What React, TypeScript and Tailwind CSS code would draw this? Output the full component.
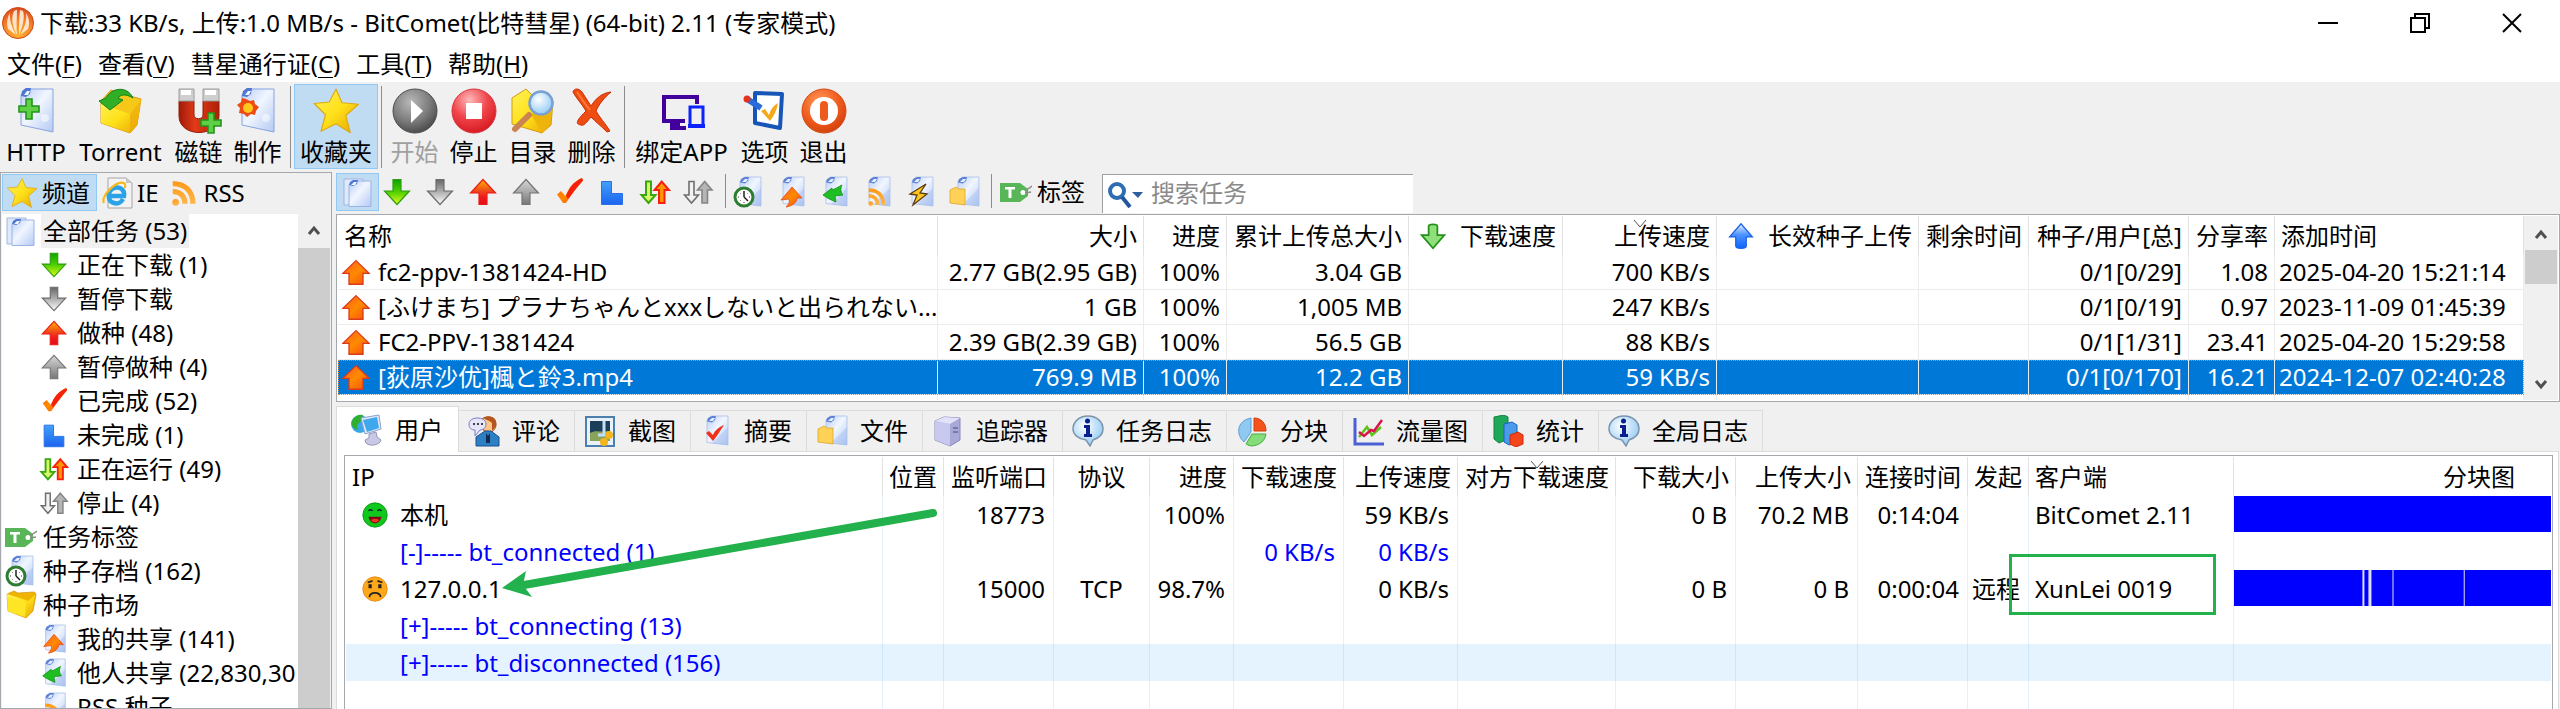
import { type FC, type ReactNode } from "react";

interface IconProps {
  className?: string
}

const Svg: FC<{ className?: string; size?: number; children: ReactNode }> = ({
  className = "size-8",
  size = 32,
  children,
}) => (
  <svg className={`shrink-0 ${className}`} viewBox={`0 0 ${size} ${size}`} fill="none" aria-hidden="true">
    {children}
  </svg>
)

// Gradients shared by every icon on the page
const Gradients = () => (
  <svg className="absolute size-0" aria-hidden="true">
    <defs>
      <linearGradient id="page" x1="0" y1="0" x2="1" y2="1">
        <stop offset="0" stopColor="#b9cdf7" />
        <stop offset="0.45" stopColor="#f1f6ff" />
        <stop offset="1" stopColor="#b4c9f3" />
      </linearGradient>
      <linearGradient id="green" x1="0" y1="0" x2="0" y2="1">
        <stop offset="0" stopColor="#0da400" />
        <stop offset="0.5" stopColor="#4fd000" />
        <stop offset="1" stopColor="#e4fb20" />
      </linearGradient>
      <linearGradient id="red" x1="0" y1="0" x2="0" y2="1">
        <stop offset="0" stopColor="#ffb400" />
        <stop offset="0.45" stopColor="#f04a1a" />
        <stop offset="0.7" stopColor="#ee1c1c" />
        <stop offset="1" stopColor="#e30d1b" />
      </linearGradient>
      <linearGradient id="orange" x1="0" y1="0" x2="1" y2="1">
        <stop offset="0" stopColor="#ff5a20" />
        <stop offset="0.5" stopColor="#ff8a00" />
        <stop offset="1" stopColor="#f84a10" />
      </linearGradient>
      <linearGradient id="grayDown" x1="0" y1="0" x2="0" y2="1">
        <stop offset="0" stopColor="#666666" />
        <stop offset="0.5" stopColor="#b0b0b0" />
        <stop offset="1" stopColor="#ffffff" />
      </linearGradient>
      <linearGradient id="grayUp" x1="0" y1="0" x2="0" y2="1">
        <stop offset="0" stopColor="#d8d8d8" />
        <stop offset="1" stopColor="#777777" />
      </linearGradient>
      <linearGradient id="yellow" x1="0" y1="0" x2="1" y2="1">
        <stop offset="0" stopColor="#fff35a" />
        <stop offset="0.5" stopColor="#ffe11a" />
        <stop offset="1" stopColor="#e5a200" />
      </linearGradient>
      <linearGradient id="blue" x1="0" y1="0" x2="0" y2="1">
        <stop offset="0" stopColor="#41a0fb" />
        <stop offset="1" stopColor="#1c64ee" />
      </linearGradient>
      <linearGradient id="blueUp" x1="0" y1="0" x2="0" y2="1">
        <stop offset="0" stopColor="#e4efff" />
        <stop offset="0.45" stopColor="#4d93ff" />
        <stop offset="1" stopColor="#0a66ff" />
      </linearGradient>
      <linearGradient id="rss" x1="0" y1="0" x2="0" y2="1">
        <stop offset="0" stopColor="#ff9c1c" />
        <stop offset="1" stopColor="#ffb64a" />
      </linearGradient>
      <linearGradient id="magnet" x1="0" y1="0" x2="1" y2="0">
        <stop offset="0" stopColor="#a01a08" />
        <stop offset="0.4" stopColor="#e23a18" />
        <stop offset="1" stopColor="#b02008" />
      </linearGradient>
      <radialGradient id="ballGray" cx="0.4" cy="0.3" r="0.75">
        <stop offset="0" stopColor="#b9b9b9" />
        <stop offset="0.6" stopColor="#7a7a7a" />
        <stop offset="1" stopColor="#454545" />
      </radialGradient>
      <radialGradient id="ballRed" cx="0.4" cy="0.25" r="0.8">
        <stop offset="0" stopColor="#ffb9b9" />
        <stop offset="0.5" stopColor="#f0474d" />
        <stop offset="1" stopColor="#d5141c" />
      </radialGradient>
      <radialGradient id="ballOrange" cx="0.4" cy="0.3" r="0.75">
        <stop offset="0" stopColor="#ff9a5a" />
        <stop offset="0.6" stopColor="#ef5a1c" />
        <stop offset="1" stopColor="#d0400c" />
      </radialGradient>
      <radialGradient id="glass" cx="0.4" cy="0.35" r="0.7">
        <stop offset="0" stopColor="#ffffff" />
        <stop offset="1" stopColor="#8cc8f4" />
      </radialGradient>
      <radialGradient id="comet" cx="0.5" cy="0.9" r="0.9">
        <stop offset="0" stopColor="#ffb02a" />
        <stop offset="0.6" stopColor="#f5802a" />
        <stop offset="1" stopColor="#d9481c" />
      </radialGradient>
    </defs>
  </svg>
)

const PageShape = () => (
  <>
    <path d="M7 5 11 1H28V30L7 27.500Z" fill="url(#page)" stroke="#aabfe8" strokeWidth="0.800" />
    <path d="M28 12V30L12 28Z" fill="#9db9ee" opacity="0.400" />
    <path d="M7 6.500 8 3l4-2 4 0-1 4-3 2.500Z" fill="#5d82d8" />
    <path d="M9 6 12 3h3l-2 3Z" fill="#e8f0ff" />
  </>
)

const CometIcon = () => (
  <Svg>
    <circle cx="16" cy="16" r="15.500" fill="url(#comet)" stroke="#cf4a1d" />
    <path d="M14 28 6 22C4 15 6 9 8 6c-1 7 2 14 6 22ZM15 28C10 19 9 10 12 4c2-1 2-1 3-1 0 8-1 17 0 25ZM17 28c0-8 0-17 1-25l3 1c2 6 0 15-4 24ZM18 28c5-8 7-15 6-22 3 4 4 11 2 16Z" fill="#fff5e4" opacity="0.850" />
  </Svg>
)

const DownIcon = ({ className }: IconProps) => (
  <Svg className={className}>
    <path d="M12 3.500h8V15h8.500L16 28.500 3.500 15H12Z" fill="url(#green)" stroke="#2f9d10" strokeWidth="1.200" />
  </Svg>
)
const DownGrayIcon = ({ className }: IconProps) => (
  <Svg className={className}>
    <path d="M12 3.500h8V15h8.500L16 28.500 3.500 15H12Z" fill="url(#grayDown)" stroke="#6c6c6c" strokeWidth="1.200" />
  </Svg>
)
const UpIcon = ({ className }: IconProps) => (
  <Svg className={className}>
    <path d="M12 28.500h8V17h8.500L16 3.500 3.500 17H12Z" fill="url(#red)" stroke="#ea1c14" strokeWidth="1.200" />
  </Svg>
)
const UpGrayIcon = ({ className }: IconProps) => (
  <Svg className={className}>
    <path d="M12 28.500h8V17h8.500L16 3.500 3.500 17H12Z" fill="url(#grayUp)" stroke="#757575" strokeWidth="1.200" />
  </Svg>
)
const CheckIcon = ({ className }: IconProps) => (
  <Svg className={className}>
    <path d="M4 18.500 8 15l4.500 5C16 12 20 6 29 2l1 2.500C24 11 19 18 13 27h-3Z" fill="url(#orange)" />
    <path d="M13 20C16 12 20 6 29 2l1 2.500C24 11 19 18 15 23Z" fill="#f7200c" />
  </Svg>
)
const PartIcon = ({ className }: IconProps) => (
  <Svg className={className}>
    <path d="M5.500 5.500h10v12h11v11h-21Z" fill="url(#blue)" stroke="#2a6fe8" />
  </Svg>
)
const RunIcon = ({ className }: IconProps) => (
  <Svg className={className}>
    <path d="M7 5.500h5V19h4.500L9.500 27 2.500 19H7Z" fill="#d9f76a" stroke="#38a80c" strokeWidth="2" />
    <path d="M20 27h5.500V14H30L22.700 5.500 15.500 14H20Z" fill="#ff9500" stroke="#f8200c" strokeWidth="2" />
  </Svg>
)
const StoppedIcon = ({ className }: IconProps) => (
  <Svg className={className}>
    <path d="M7 5.500h5V19h4.500L9.500 27 2.500 19H7Z" fill="#f2f2f2" stroke="#6f6f6f" strokeWidth="1.600" />
    <path d="M20 27h5.500V14H30L22.700 5.500 15.500 14H20Z" fill="#b5b5b5" stroke="#858585" strokeWidth="1.600" />
  </Svg>
)
const PagesIcon = ({ className }: IconProps) => (
  <Svg className={className}>
    <path d="M2 3h19v26H2Z" fill="#dfe9fb" stroke="#9fb7e3" />
    <path d="M7 9 11 5h18v25.500H7Z" fill="url(#page)" stroke="#9ab2e4" />
    <path d="m7 9 1-3 3-2h5l-1 4-4 2Z" fill="#4f78d2" />
    <path d="m9 9 3-3h3l-2 3Z" fill="#f0f5ff" />
  </Svg>
)
const TagIcon = ({ className }: IconProps) => (
  <Svg className={className}>
    <path d="M0 7h20l8 6v7l-8 6H0Z" fill="#58b558" />
    <path d="M5 11h10v2.500h-3.500V22h-3v-8.500H5Z" fill="#fff" />
    <circle cx="23" cy="16.500" r="2.500" fill="#fff" />
    <path d="m25 15 7-5M25 17l6-1" stroke="#8a8a8a" strokeWidth="1.500" />
  </Svg>
)
const ArchiveIcon = ({ className }: IconProps) => (
  <Svg className={className}>
    <PageShape />
    <circle cx="11" cy="21" r="9" fill="#fff" stroke="#2f7d32" strokeWidth="3" />
    <path d="M11 21V15M11 21l4 4" stroke="#222" strokeWidth="1.500" />
    <path d="M5 21h1M16 21h1M11 27v-1M7 17l.5.5M15 17l-.5.5M7 25l.5-.5" stroke="#333" />
  </Svg>
)
const FolderIcon = ({ className }: IconProps) => (
  <Svg className={className}>
    <path d="m2 5 7-3 4 2 15-1c2 0 3 1 3 3l-3 16-7 7L3 22Z" fill="#f0b400" stroke="#c98c10" strokeWidth="0.600" />
    <path d="m2 5 16 5 5 2 7-6-3 16-6 7L3 22Z" fill="url(#yellow)" />
    <path d="m3 8 18 6-1 14L3 22Z" fill="#ffe625" />
  </Svg>
)
const ShareUpIcon = ({ className }: IconProps) => (
  <Svg className={className}>
    <PageShape />
    <path d="M16 11 26 22h-5c0 4-4 8-11 9 3-3 4-5 3-8l-8 1Z" fill="url(#orange)" stroke="#e54a1a" strokeWidth="0.800" />
  </Svg>
)
const ShareDownIcon = ({ className }: IconProps) => (
  <Svg className={className}>
    <PageShape />
    <path d="M23 9c-2 4-1 8 1 10l-8 1 1 6C12 24 8 22 4 19l9-7 0 2c3-1 6-3 10-5Z" fill="#1fbf24" stroke="#0f8d16" strokeWidth="0.800" />
  </Svg>
)
const RssShape = () => (
  <>
    <circle cx="7" cy="26" r="3.500" fill="url(#rss)" />
    <path d="M4 14.500c8 0 13 5 13 13M4 6c13 0 21.500 8 21.500 21.500" stroke="url(#rss)" strokeWidth="5.500" />
  </>
)
const RssIcon = ({ className }: IconProps) => (
  <Svg className={className}>
    <RssShape />
  </Svg>
)
const RssPageIcon = ({ className }: IconProps) => (
  <Svg className={className}>
    <PageShape />
    <g transform="translate(4 10) scale(0.680)">
      <RssShape />
    </g>
  </Svg>
)
const FlashIcon = ({ className }: IconProps) => (
  <Svg className={className}>
    <PageShape />
    <path d="m21 8-16 10 7 1-4 10 14-11-7-1Z" fill="#ffc61a" stroke="#5a3a10" strokeWidth="1.300" />
  </Svg>
)
const FilesIcon = ({ className }: IconProps) => (
  <Svg className={className}>
    <g transform="translate(3 0)">
      <PageShape />
    </g>
    <path d="m2 14 6-3 3 2 6 0v16l-15-2Z" fill="#ffd257" stroke="#dba52c" strokeWidth="0.800" />
  </Svg>
)
const SummaryIcon = ({ className }: IconProps) => (
  <Svg className={className}>
    <PageShape />
    <path d="m6 18 3-2 4 4c2-5 6-8 11-10-4 6-7 11-11 16Z" fill="#f0301a" />
  </Svg>
)
const StarShape = () => (
  <path d="m16 1.500 4 9 11 1-8.500 7.500 3 11.500-9.500-6-10 5 3-11L1.500 11l10-1Z" fill="url(#yellow)" stroke="#e0a912" strokeWidth="0.800" strokeLinejoin="round" />
)
const StarIcon = ({ className }: IconProps) => (
  <Svg className={className}>
    <StarShape />
  </Svg>
)
const IeIcon = ({ className }: IconProps) => (
  <Svg className={className}>
    <path d="M6 1h18l6 5v25H6Z" fill="#f3f3f3" stroke="#a5a5a5" />
    <path d="M24 1v5h6Z" fill="#c5c5c5" />
    <path d="M21 22c-2 4-6 5-9 4-7-2-7-12 0-15 6-2 11 2 10 8H9" stroke="#2ba3e6" strokeWidth="4.500" />
    <path d="M2 26C-2 20 14 3 22 6c2 1 1 3 1 5" stroke="#f8b91a" strokeWidth="2.200" />
  </Svg>
)

// Main tool bar icons are drawn on a 48 unit grid
const BigPage = () => (
  <>
    <path d="m14 8 4-6h28v43L14 38Z" fill="url(#page)" stroke="#86a3e0" />
    <path d="m14 9 1-5 4-3h5l-1 6-4 3Z" fill="#4f78d2" />
    <path d="m17 8 3-4h3l-2 4Z" fill="#f0f5ff" />
    <circle cx="38" cy="31" r="4" fill="#fff" opacity="0.500" />
  </>
)
const Plus = () => (
  <path d="M7 0h6v7h7v6h-7v7H7v-7H0V7h7Z" fill="#5fd046" stroke="#25931c" strokeWidth="1.600" />
)
const HttpIcon = () => (
  <Svg className="size-12" size={48}>
    <g transform="translate(-5 0)">
      <BigPage />
    </g>
    <g transform="translate(7 12)">
      <Plus />
    </g>
  </Svg>
)
const TorrentIcon = () => (
  <Svg className="size-12" size={48}>
    <path d="m4 14 10-11 8 3 22 6-4 26-7 8L4 36Z" fill="#f5c81a" stroke="#d79a10" />
    <path d="m4 17 29 10 11-15-4 26-7 8L4 36Z" fill="url(#yellow)" />
    <path d="m33 27 11-15-4 26-7 8Z" fill="#eda90a" opacity="0.700" />
    <path d="M2 14 9 11C14 1 30-2 36 11c-8-5-13-3-15 0l5 2-13 10Z" fill="#2fae26" stroke="#14831a" />
  </Svg>
)
const MagnetIcon = () => (
  <Svg className="size-12" size={48}>
    <path d="M4 14h15v14c0 5 9 5 9 0V14h16v15c0 22-40 22-40 0Z" fill="url(#magnet)" stroke="#8e1c08" />
    <path d="M4 2h15v12H4ZM28 2h16v12H28Z" fill="#cfcfcf" stroke="#9c9c9c" />
    <path d="M6 3h10v5H6ZM30 3h11v5H30Z" fill="#fff" />
    <g transform="translate(26 26)">
      <Plus />
    </g>
  </Svg>
)
const MakeIcon = () => (
  <Svg className="size-12" size={48}>
    <g transform="translate(-6 0)">
      <BigPage />
    </g>
    <path d="m12 12 4 2 4-1 1 4 4 3-3 4-1 4-4-1-4 3-3-3-5-1 1-5-3-3 4-3 1-4Z" fill="#ee4a12" />
    <circle cx="14" cy="21" r="5" fill="#ffc71e" />
  </Svg>
)
const BigStarIcon = () => (
  <Svg className="size-12">
    <StarShape />
  </Svg>
)
const StartIcon = () => (
  <Svg className="size-12" size={48}>
    <circle cx="24" cy="24" r="22" fill="url(#ballGray)" stroke="#4c4c4c" />
    <path d="m20 13 12 11-12 12Z" fill="#fff" />
  </Svg>
)
const StopIcon = () => (
  <Svg className="size-12" size={48}>
    <circle cx="24" cy="24" r="22" fill="url(#ballRed)" stroke="#d8343a" />
    <path d="M16 16h16v16H16Z" fill="#fff" />
  </Svg>
)
const DirectoryIcon = () => (
  <Svg className="size-12" size={48}>
    <path d="m3 11 14-9 7 7 20 5-2 24-9 8L3 37Z" fill="url(#yellow)" stroke="#d79a10" />
    <path d="m22 27 20-8-1 19-8 8Z" fill="#eeb40c" />
    <path d="M20 28 6 42" stroke="#c98450" strokeWidth="6" strokeLinecap="round" />
    <circle cx="32" cy="16" r="11.500" fill="url(#glass)" stroke="#7aa0d0" strokeWidth="2.500" />
  </Svg>
)
const DeleteIcon = () => (
  <Svg className="size-12" size={48}>
    <path d="M5 5c1-4 6-4 9 0l9 14c5-8 11-13 20-14-7 6-12 12-15 19 4 7 9 12 14 20l-3 1c-6-6-11-10-16-15-5 6-7 9-10 8-6-1-5-4 5-14C14 17 8 11 5 5Z" fill="#ee4c10" stroke="#c83008" />
    <path d="M9 5c5 8 9 13 13 18" stroke="#ff7a30" strokeWidth="2" />
  </Svg>
)
const BindIcon = () => (
  <Svg className="size-12" size={48}>
    <path d="M27 34H6V10h33v7" stroke="#42009c" strokeWidth="4" />
    <path d="M20 34v4h-6v3h14" stroke="#42009c" strokeWidth="4" />
    <path d="M32 20h13v19H32Z" stroke="#0b24fb" strokeWidth="3" />
    <path d="M30 37h17v4H30Z" fill="#0b24fb" />
  </Svg>
)
const OptionsIcon = () => (
  <Svg className="size-12" size={48}>
    <path d="m14 6 27 1-2 34-25-5Z" fill="#fff" stroke="#1756b6" strokeWidth="4" strokeLinejoin="round" />
    <path d="m20 24 4-2 4 6c2-6 4-9 9-12-1 7-4 13-8 18Z" fill="#f6a81c" />
    <path d="m6 12 14 9" stroke="#2a6bdc" strokeWidth="6" />
    <circle cx="6" cy="12" r="3.500" fill="#e5321a" />
  </Svg>
)
const ExitIcon = () => (
  <Svg className="size-12" size={48}>
    <circle cx="24" cy="24" r="22" fill="url(#ballOrange)" stroke="#d04a14" />
    <circle cx="24" cy="24" r="14" fill="#fff" />
    <rect x="20" y="14" width="8" height="20" rx="4" fill="#ee5a1c" />
  </Svg>
)

// Detail tab icons
const PeersIcon = () => (
  <Svg>
    <circle cx="9" cy="10" r="9" fill="#3aa8e8" />
    <path d="M2 5c3-4 7-5 10-4l-2 6-4 4 1 5C1 15-1 9 2 5Z" fill="#2fae2f" />
    <path d="m10 4 18-3 2 14-16 5Z" fill="#dfe8f8" stroke="#8ea3cf" />
    <path d="m12 6 14-3 2 11-12 4Z" fill="#3fa7ee" />
    <path d="m18 20 7-2 1 5 4 3c-1 5-11 7-15 3l-1-3 4-2Z" fill="#c9c9e6" stroke="#9595ba" />
  </Svg>
)
const CommentIcon = () => (
  <Svg>
    <path d="M14 4c4-4 14-3 14 6 0 3-2 5-4 7l-8-1Z" fill="#ffc685" stroke="#a8542a" />
    <path d="M15 3c8-4 15 0 13 8l-4 5 0-8c-3-3-6-3-9-5Z" fill="#b4561f" />
    <path d="M8 31V22l9-6h6l8 6v9Z" fill="#2d7fc4" stroke="#1c4f92" />
    <path d="m18 18 2 3 2-3 0 10h-4Z" fill="#10294f" />
    <path d="M1 9c0-8 17-8 17 0 0 4-3 6-6 6l-5 6v-6c-4 0-6-2-6-6Z" fill="#e6e6fb" stroke="#7a7ac8" />
    <path d="M5 9h2M9 9h2M13 9h2" stroke="#444" strokeWidth="2" />
  </Svg>
)
const ShotIcon = () => (
  <Svg>
    <path d="M2 2h28v29H2Z" fill="#e8f1fa" stroke="#4d7fae" strokeWidth="2" />
    <path d="M6 6h20v20H6Z" fill="#1d3e58" />
    <path d="M6 18c6-4 12 0 20-2v10H6Z" fill="#8aa35a" />
    <path d="M20 6v13M14 20h12" stroke="#bfe0f5" strokeWidth="3" />
    <circle cx="25" cy="20" r="4" fill="#f3b51a" />
    <circle cx="20" cy="27" r="4" fill="#f3b51a" />
  </Svg>
)
const TrackerIcon = () => (
  <Svg>
    <path d="m3 6 9-4 16 1v22l-10 6L3 25Z" fill="#a9a9d8" stroke="#8686b8" />
    <path d="m3 6 15 3v22L3 25Z" fill="#c9c9ef" />
    <path d="m3 6 9-4 16 1-10 6Z" fill="#e2e2fa" />
    <path d="M21 13h5M21 17h5" stroke="#7777ad" strokeWidth="2" />
  </Svg>
)
const LogIcon = () => (
  <Svg>
    <path d="M16 1c9 0 15 6 15 13 0 6-4 9-10 11l-3 6-4-6C7 24 1 20 1 14 1 7 7 1 16 1Z" fill="url(#glass)" stroke="#7c93ac" strokeWidth="1.500" />
    <circle cx="15.500" cy="6" r="2.500" fill="#0b1f8f" />
    <path d="M12 10h6v9h2v3h-8v-3h2v-6h-2Z" fill="#0b1f8f" />
  </Svg>
)
const PiecesIcon = () => (
  <Svg>
    <path d="M15 3v14L8 27C0 20 0 6 15 3Z" fill="#8fc9f2" stroke="#5c9fd4" />
    <path d="M18 3c7 0 12 5 12 13H18Z" fill="#f4541c" stroke="#d43c0c" />
    <path d="M16 19h14c-1 7-6 11-14 12-2 0-4-1-6-2Z" fill="#86dc7a" stroke="#44ad3c" />
  </Svg>
)
const TrafficIcon = () => (
  <Svg>
    <path d="M3 3v26h29" stroke="#4b60d4" strokeWidth="3" />
    <path d="m7 22 8-10 5 8 9-8" stroke="#5ac514" strokeWidth="2.500" />
    <path d="m7 17 5 4 7-6 3 1 8-11" stroke="#d8144a" strokeWidth="2.500" />
  </Svg>
)
const StatsIcon = () => (
  <Svg>
    <path d="m2 2 10-2 4 2v22L7 28l-5-4Z" fill="#1fa75a" stroke="#118243" />
    <path d="m12 9 8-2 5 3v18l-8 2-5-3Z" fill="#4a9bea" stroke="#1e62c4" />
    <path d="m18 20 8-3 5 3v9l-7 3-6-3Z" fill="#f5451c" stroke="#cc2a0a" />
  </Svg>
)

const RowUpIcon = () => (
  <Svg className="size-7">
    <path d="M16 3 31 17.500h-7V30H8V17.500H1Z" fill="url(#orange)" stroke="#dc3a1c" strokeWidth="1.500" />
  </Svg>
)
const HeadDownIcon = () => (
  <Svg className="size-7">
    <path d="M11 5c0-3 10-3 10 0v10h8L16 30 3 15h8Z" fill="#8fe07a" stroke="#22921a" strokeWidth="2" />
  </Svg>
)
const HeadUpIcon = () => (
  <Svg className="size-7">
    <path d="M10 27V17H3L16 2l13 15h-7v10c0 4-12 4-12 0Z" fill="url(#blueUp)" stroke="#1a62e8" strokeWidth="1.500" />
  </Svg>
)
const HappyIcon = () => (
  <Svg className="size-[26px]">
    <circle cx="16" cy="16" r="15" fill="#0fc81c" stroke="#0a8a14" />
    <path d="M8 11c1-2 4-2 5 0M19 11c1-2 4-2 5 0" stroke="#123" strokeWidth="1.800" />
    <path d="M8 18h16c-1 5-4 8-8 8s-7-3-8-8Z" fill="#7c0a10" />
    <path d="M11 22c3-2 7-2 10 0-2 4-8 4-10 0Z" fill="#f0322a" />
  </Svg>
)
const SadIcon = () => (
  <Svg className="size-[26px]">
    <circle cx="16" cy="16" r="15" fill="#ffa71a" stroke="#e0820a" />
    <path d="m7 8 6-2M19 6l6 2" stroke="#222" strokeWidth="2" />
    <path d="M10 10v5M22 10v5" stroke="#222" strokeWidth="4" />
    <path d="M9 26c1-7 13-7 14 0" stroke="#222" strokeWidth="2" />
  </Svg>
)
const ScrollArrow = ({ down = false }: { down?: boolean }) => (
  <svg className="h-3 w-[14px]" viewBox="0 0 14 12" fill="none" aria-hidden="true">
    <path d={down ? "m2 3 5 6 5-6" : "m2 9 5-6 5 6"} stroke="#505050" strokeWidth="3" />
  </svg>
)
const SortMark = () => (
  <svg className="absolute top-1 left-1/2 h-2 w-3 -translate-x-1/2" viewBox="0 0 12 8" fill="none" aria-hidden="true">
    <path d="m0 0 6 7 6-7" stroke="#555" />
  </svg>
)

const menus = [
  { label: "文件", key: "F" },
  { label: "查看", key: "V" },
  { label: "彗星通行证", key: "C" },
  { label: "工具", key: "T" },
  { label: "帮助", key: "H" },
]

interface Tool {
  label: string
  Icon: FC
  width: string
  active?: boolean
  disabled?: boolean
}

const toolGroups: Tool[][] = [
  [
    { label: "HTTP", Icon: HttpIcon, width: "w-[72px]" },
    { label: "Torrent", Icon: TorrentIcon, width: "w-[97px]" },
    { label: "磁链", Icon: MagnetIcon, width: "w-[59px]" },
    { label: "制作", Icon: MakeIcon, width: "w-[59px]" },
  ],
  [{ label: "收藏夹", Icon: BigStarIcon, width: "w-[84px]", active: true }],
  [
    { label: "开始", Icon: StartIcon, width: "w-[59px]", disabled: true },
    { label: "停止", Icon: StopIcon, width: "w-[59px]" },
    { label: "目录", Icon: DirectoryIcon, width: "w-[59px]" },
    { label: "删除", Icon: DeleteIcon, width: "w-[59px]" },
  ],
  [
    { label: "绑定APP", Icon: BindIcon, width: "w-[107px]" },
    { label: "选项", Icon: OptionsIcon, width: "w-[59px]" },
    { label: "退出", Icon: ExitIcon, width: "w-[59px]" },
  ],
]

const tree = [
  { label: "全部任务 (53)", Icon: PagesIcon, level: 0, selected: true },
  { label: "正在下载 (1)", Icon: DownIcon, level: 1 },
  { label: "暂停下载", Icon: DownGrayIcon, level: 1 },
  { label: "做种 (48)", Icon: UpIcon, level: 1 },
  { label: "暂停做种 (4)", Icon: UpGrayIcon, level: 1 },
  { label: "已完成 (52)", Icon: CheckIcon, level: 1 },
  { label: "未完成 (1)", Icon: PartIcon, level: 1 },
  { label: "正在运行 (49)", Icon: RunIcon, level: 1 },
  { label: "停止 (4)", Icon: StoppedIcon, level: 1 },
  { label: "任务标签", Icon: TagIcon, level: 0 },
  { label: "种子存档 (162)", Icon: ArchiveIcon, level: 0 },
  { label: "种子市场", Icon: FolderIcon, level: 0 },
  { label: "我的共享 (141)", Icon: ShareUpIcon, level: 1 },
  { label: "他人共享 (22,830,30", Icon: ShareDownIcon, level: 1 },
  { label: "RSS 种子", Icon: RssPageIcon, level: 1 },
]

const stateFilters = [
  { label: "全部任务", Icon: PagesIcon },
  { label: "正在下载", Icon: DownIcon },
  { label: "暂停下载", Icon: DownGrayIcon },
  { label: "做种", Icon: UpIcon },
  { label: "暂停做种", Icon: UpGrayIcon },
  { label: "已完成", Icon: CheckIcon },
  { label: "未完成", Icon: PartIcon },
  { label: "正在运行", Icon: RunIcon },
  { label: "停止", Icon: StoppedIcon },
]

const sourceFilters = [
  { label: "种子存档", Icon: ArchiveIcon },
  { label: "我的共享", Icon: ShareUpIcon },
  { label: "他人共享", Icon: ShareDownIcon },
  { label: "RSS 种子", Icon: RssPageIcon },
  { label: "快速", Icon: FlashIcon },
  { label: "文件", Icon: FilesIcon },
]

const taskColumns = [
  { label: "名称", width: "", align: "text-left" },
  { label: "大小", width: "w-[206px]", align: "text-right" },
  { label: "进度", width: "w-[83px]", align: "text-right" },
  { label: "累计上传总大小", width: "w-[182px]", align: "text-right" },
  { label: "下载速度", width: "w-[154px]", align: "text-right", Icon: HeadDownIcon },
  { label: "上传速度", width: "w-[154px]", align: "text-right", sorted: true },
  { label: "长效种子上传", width: "w-[202px]", align: "text-right", Icon: HeadUpIcon },
  { label: "剩余时间", width: "w-[110px]", align: "text-right" },
  { label: "种子/用户[总]", width: "w-[160px]", align: "text-right" },
  { label: "分享率", width: "w-[86px]", align: "text-right" },
  { label: "添加时间", width: "w-[249px]", align: "text-left" },
]

const tasks = [
  ["fc2-ppv-1381424-HD", "2.77 GB(2.95 GB)", "100%", "3.04 GB", "", "700 KB/s", "", "", "0/1[0/29]", "1.08", "2025-04-20 15:21:14"],
  ["[ふけまち] プラナちゃんとxxxしないと出られない...", "1 GB", "100%", "1,005 MB", "", "247 KB/s", "", "", "0/1[0/19]", "0.97", "2023-11-09 01:45:39"],
  ["FC2-PPV-1381424", "2.39 GB(2.39 GB)", "100%", "56.5 GB", "", "88 KB/s", "", "", "0/1[1/31]", "23.41", "2025-04-20 15:29:58"],
  ["[荻原沙优]楓と鈴3.mp4", "769.9 MB", "100%", "12.2 GB", "", "59 KB/s", "", "", "0/1[0/170]", "16.21", "2024-12-07 02:40:28"],
]
const selectedTask = 3

const detailTabs = [
  { label: "用户", Icon: PeersIcon },
  { label: "评论", Icon: CommentIcon },
  { label: "截图", Icon: ShotIcon },
  { label: "摘要", Icon: SummaryIcon },
  { label: "文件", Icon: FilesIcon },
  { label: "追踪器", Icon: TrackerIcon },
  { label: "任务日志", Icon: LogIcon },
  { label: "分块", Icon: PiecesIcon },
  { label: "流量图", Icon: TrafficIcon },
  { label: "统计", Icon: StatsIcon },
  { label: "全局日志", Icon: LogIcon },
]

const peerColumns = [
  { label: "IP", width: "", align: "text-left" },
  { label: "位置", width: "w-[61px]", align: "text-right" },
  { label: "监听端口", width: "w-[110px]", align: "text-right" },
  { label: "协议", width: "w-[96px]", align: "text-center" },
  { label: "进度", width: "w-[84px]", align: "text-right" },
  { label: "下载速度", width: "w-[110px]", align: "text-right" },
  { label: "上传速度", width: "w-[114px]", align: "text-right" },
  { label: "对方下载速度", width: "w-[158px]", align: "text-right", sorted: true },
  { label: "下载大小", width: "w-[120px]", align: "text-right" },
  { label: "上传大小", width: "w-[122px]", align: "text-right" },
  { label: "连接时间", width: "w-[110px]", align: "text-right" },
  { label: "发起", width: "w-[61px]", align: "text-right" },
  { label: "客户端", width: "w-[205px]", align: "text-left" },
]

interface Peer {
  Icon?: FC
  group?: boolean
  hover?: boolean
  gaps?: { x: number; w: number }[]
  cells: string[]
}

const peers: Peer[] = [
  {
    Icon: HappyIcon,
    gaps: [],
    cells: ["本机", "", "18773", "", "100%", "", "59 KB/s", "", "0 B", "70.2 MB", "0:14:04", "", "BitComet 2.11"],
  },
  {
    group: true,
    cells: ["[-]----- bt_connected (1)", "", "", "", "", "0 KB/s", "0 KB/s", "", "", "", "", "", ""],
  },
  {
    Icon: SadIcon,
    gaps: [
      { x: 128, w: 2 },
      { x: 134, w: 3 },
      { x: 158, w: 1 },
      { x: 229, w: 1 },
    ],
    cells: ["127.0.0.1", "", "15000", "TCP", "98.7%", "", "0 KB/s", "", "0 B", "0 B", "0:00:04", "远程", "XunLei 0019"],
  },
  {
    group: true,
    cells: ["[+]----- bt_connecting (13)", "", "", "", "", "", "", "", "", "", "", "", ""],
  },
  {
    group: true,
    hover: true,
    cells: ["[+]----- bt_disconnected (156)", "", "", "", "", "", "", "", "", "", "", "", ""],
  },
]

const Divider = ({ className = "" }: IconProps) => <div className={`w-px bg-[#8c8c8c] ${className}`} />

const TitleBar = () => (
  <header className="flex h-[46px] items-center">
    <div className="pl-[2px]">
      <CometIcon />
    </div>
    <h1 className="flex-1 pl-[6px]">下载:33 KB/s, 上传:1.0 MB/s - BitComet(比特彗星) (64-bit) 2.11 (专家模式)</h1>
    <div className="flex h-full items-center pr-[2px]">
      <button type="button" aria-label="最小化" className="flex h-full w-[92px] items-center justify-center">
        <svg className="size-5" viewBox="0 0 20 20"><path d="M0 9h20v2H0Z" fill="#000" /></svg>
      </button>
      <button type="button" aria-label="还原" className="flex h-full w-[92px] items-center justify-center">
        <svg className="size-5" viewBox="0 0 20 20" fill="none" stroke="#000" strokeWidth="2">
          <path d="M1 5h14v14H1ZM5 5V1h14v14h-4" />
        </svg>
      </button>
      <button type="button" aria-label="关闭" className="flex h-full w-[92px] items-center justify-center">
        <svg className="size-5" viewBox="0 0 20 20" stroke="#000" strokeWidth="2"><path d="m1 1 18 18M19 1 1 19" /></svg>
      </button>
    </div>
  </header>
)

const MenuBar = () => (
  <nav className="flex h-9 items-center gap-4 pl-[7px]">
    {menus.map((menu) => (
      <button type="button" key={menu.key}>
        {menu.label}(<span className="underline decoration-1 underline-offset-4">{menu.key}</span>)
      </button>
    ))}
  </nav>
)

const ToolBar = () => (
  <div className="flex h-[90px] bg-[#f0f0f0] pt-[2px]">
    {toolGroups.map((group, index) => (
      <div className="flex" key={group[0].label}>
        {index > 0 && <Divider className="mx-[3px] mt-[2px] h-[82px]" />}
        {group.map(({ label, Icon, width, active, disabled }) => (
          <button
            type="button"
            key={label}
            disabled={disabled}
            className={`flex h-[85px] flex-col items-center whitespace-nowrap border pt-[2px] ${width} ${
              active ? "border-[#90c8f6] bg-[#c0dcf3]" : "border-transparent"
            } ${disabled ? "text-[#a0a0a0]" : ""}`}
          >
            <Icon />
            <span className="leading-[34px]">{label}</span>
          </button>
        ))}
      </div>
    ))}
  </div>
)

const SideBar = () => (
  <aside className="flex w-[332px] shrink-0 flex-col border border-[#a5a8ad] bg-[#f0f0f0] p-px pb-0">
    <div className="flex h-10 shrink-0 items-start">
      <button type="button" className="flex h-[37px] items-center gap-1 border border-[#90c8f6] bg-[#c0dcf3] pr-[6px] pl-[3px]">
        <StarIcon />
        频道
      </button>
      <button type="button" className="flex h-[37px] items-center gap-[3px] pl-[5px]">
        <IeIcon />
        IE
      </button>
      <button type="button" className="flex h-[37px] items-center gap-1 pl-[11px]">
        <RssIcon className="size-[30px]" />
        RSS
      </button>
    </div>
    <div className="flex min-h-0 flex-1">
      <ul className="min-w-0 flex-1 overflow-hidden bg-white">
        {tree.map(({ label, Icon, level, selected }) => (
          <li key={label} className={`flex h-[34px] items-center ${level === 0 ? "gap-1 pl-[3px]" : "gap-2 pl-[37px]"}`}>
            <Icon className={level === 0 ? "size-8" : "size-[30px]"} />
            <a href="#" className={`leading-[34px] whitespace-nowrap ${selected ? "bg-[#f0f0f0] px-[2px]" : level === 0 ? "pl-[2px]" : ""}`}>
              {label}
            </a>
          </li>
        ))}
      </ul>
      <div className="flex w-8 flex-col">
        <div className="flex h-[34px] shrink-0 items-center justify-center">
          <ScrollArrow />
        </div>
        <div className="flex-1 bg-[#cdcdcd]" />
      </div>
    </div>
  </aside>
)

const FilterBar = () => (
  <div className="flex h-[42px] items-start pt-px">
    {stateFilters.map(({ label, Icon }, index) => (
      <button
        type="button"
        key={label}
        aria-label={label}
        className={`flex h-[38px] w-[43px] items-center border ${
          index === 0 ? "justify-center border-[#90c8f6] bg-[#c0dcf3]" : "border-transparent pl-px"
        }`}
      >
        <Icon />
      </button>
    ))}
    <Divider className="mt-px mr-px ml-[2px] h-[34px]" />
    {sourceFilters.map(({ label, Icon }) => (
      <button type="button" key={label} aria-label={label} className="flex h-[38px] w-[43px] items-center justify-center">
        <Icon />
      </button>
    ))}
    <Divider className="mt-px ml-[6px] h-[34px]" />
    <button type="button" className="flex h-[38px] items-center gap-[5px] pl-2">
      <TagIcon />
      标签
    </button>
    <label className="mt-px ml-[17px] flex h-[39px] w-[311px] items-center border-t border-l border-[#a0a0a0] bg-white pl-1">
      <svg className="h-9 w-10 shrink-0" viewBox="0 0 40 36" fill="none" aria-hidden="true">
        <circle cx="10" cy="15" r="7" stroke="#2f6db3" strokeWidth="4" />
        <path d="m15 21 8 10" stroke="#23569c" strokeWidth="4" />
        <path d="M25 16h11l-5 6Z" fill="#2f5f9e" />
      </svg>
      <input
        type="text"
        aria-label="搜索任务"
        placeholder="搜索任务"
        className="w-full min-w-0 pb-[2px] pl-1 placeholder:text-[#8a8a8a] placeholder:opacity-100 outline-none"
      />
    </label>
  </div>
)

const TaskList = () => (
  <div className="flex border border-[#a5a8ad] bg-white p-px">
    <table className="w-full table-fixed border-separate border-spacing-0 whitespace-nowrap">
      <thead>
        <tr className="h-[39px]">
          {taskColumns.map(({ label, width, align, Icon, sorted }) => (
            <th key={label} className={`relative border-r border-[#e2e2e2] px-[6px] font-normal ${width} ${align}`}>
              {sorted && <SortMark />}
              {Icon ? (
                <span className="flex items-center justify-between pl-1">
                  <Icon />
                  {label}
                </span>
              ) : (
                label
              )}
            </th>
          ))}
        </tr>
      </thead>
      <tbody>
        {tasks.map((task, row) => (
          <tr
            key={task[0]}
            className={row === selectedTask ? "bg-[#0078d7] text-white outline-1 -outline-offset-1 outline-dotted outline-[#e08a3a]" : ""}
          >
            {task.map((value, col) => (
              <td
                key={taskColumns[col].label}
                className={`h-[35px] overflow-hidden border-r border-b border-[#ececec] leading-[34px] ${taskColumns[col].align} ${
                  col === 0 || col === 10 ? "pl-1" : "pr-[6px]"
                }`}
              >
                {col === 0 ? (
                  <span className="flex items-center gap-2">
                    <RowUpIcon />
                    {value}
                  </span>
                ) : (
                  value
                )}
              </td>
            ))}
          </tr>
        ))}
        <tr>
          {taskColumns.map(({ label }) => (
            <td key={label} className="h-[5px] border-r border-[#ececec]" />
          ))}
        </tr>
      </tbody>
    </table>
    <div className="flex w-[34px] shrink-0 flex-col items-center bg-[#f0f0f0]">
      <div className="flex h-[34px] items-center pt-1">
        <ScrollArrow />
      </div>
      <div className="h-[34px] w-8 bg-[#cdcdcd]" />
      <div className="flex flex-1 items-end pb-[10px]">
        <ScrollArrow down />
      </div>
    </div>
  </div>
)

const DetailTabs = () => (
  <div role="tablist" className="relative z-10 -mb-px flex items-end pt-1">
    {detailTabs.map(({ label, Icon }, index) => (
      <button
        type="button"
        role="tab"
        key={label}
        aria-selected={index === 0}
        className={`flex items-center gap-3 whitespace-nowrap border-t border-r border-[#dcdcdc] ${
          index === 0 ? "h-[46px] border-l bg-white pr-[15px] pl-[14px]" : "h-[42px] border-b pr-[14px] pl-[9px]"
        }`}
      >
        <Icon />
        {label}
      </button>
    ))}
  </div>
)

const PieceMap = ({ gaps }: { gaps: { x: number; w: number }[] }) => (
  <svg className="block h-9 w-full" viewBox="0 0 316 36" preserveAspectRatio="none" role="img" aria-label="分块图">
    <rect width="316" height="36" fill="#0000ff" />
    {gaps.map(({ x, w }) => (
      <rect key={x} x={x} width={w} height="36" fill="#dcdcff" />
    ))}
  </svg>
)

const PeerList = () => (
  <div className="relative flex-1 border border-b-0 border-[#a5a8ad] bg-white p-px">
    <table className="w-full table-fixed border-separate border-spacing-0 whitespace-nowrap">
      <thead>
        <tr className="h-[39px]">
          {peerColumns.map(({ label, width, align, sorted }) => (
            <th
              key={label}
              className={`relative border-r border-[#e2e2e2] font-normal ${width} ${align} ${
                align === "text-left" ? "pl-[6px]" : align === "text-right" ? "pr-[6px]" : ""
              }`}
            >
              {sorted && <SortMark />}
              {label}
            </th>
          ))}
          <th className="w-[317px] pr-9 text-right font-normal">分块图</th>
        </tr>
      </thead>
      <tbody>
        {peers.map(({ Icon, group, hover, gaps, cells }) => (
          <tr key={cells[0]} className={`${group ? "text-[#0000ff]" : ""} ${hover ? "bg-[#e5f3ff]" : ""}`}>
            {cells.map((value, col) => (
              <td
                key={peerColumns[col].label}
                className={`h-[37px] border-r leading-[37px] ${hover ? "border-[#cde6fb]" : "border-[#e6f0fb]"} ${peerColumns[col].align} ${
                  col === 0 ? "pl-4" : col === 12 ? "pl-[6px]" : col === 3 ? "" : "pr-2"
                }`}
              >
                {col === 0 ? (
                  <span className="flex items-center gap-3">
                    {Icon ? <Icon /> : <span className="w-[26px]" />}
                    {value}
                  </span>
                ) : (
                  value
                )}
              </td>
            ))}
            <td className="h-[37px] align-top">{gaps && <PieceMap gaps={gaps} />}</td>
          </tr>
        ))}
        <tr>
          {peerColumns.map(({ label }) => (
            <td key={label} className="h-10 border-r border-[#e6f0fb]" />
          ))}
          <td />
        </tr>
      </tbody>
    </table>
    {/* hand-drawn marks over the list */}
    <svg className="absolute top-[50px] left-[155px] h-24 w-[440px]" viewBox="0 0 440 96" aria-hidden="true">
      <path d="M433 7 24 79" stroke="#22b14c" strokeWidth="8" strokeLinecap="round" />
      <path d="m2 82 24-17-3 14 9 12Z" fill="#22b14c" />
    </svg>
    <div className="absolute top-[98px] right-[336px] h-[61px] w-[207px] border-3 border-[#22b14c]" />
  </div>
)

export default function App() {
  return (
    <div className="flex h-screen flex-col overflow-hidden bg-white font-['Noto_Sans','Noto_Sans_CJK_SC',sans-serif] text-2xl leading-8 text-black">
      <Gradients />
      <TitleBar />
      <MenuBar />
      <ToolBar />
      <div className="flex min-h-0 flex-1 gap-1 bg-[#f0f0f0]">
        <SideBar />
        <main className="flex min-w-0 flex-1 flex-col">
          <FilterBar />
          <TaskList />
          <DetailTabs />
          <div className="mr-px flex min-h-0 flex-1 border border-b-0 border-[#dcdcdc] bg-white pt-[3px] pr-[5px] pl-[7px]">
            <PeerList />
          </div>
        </main>
      </div>
    </div>
  )
}
